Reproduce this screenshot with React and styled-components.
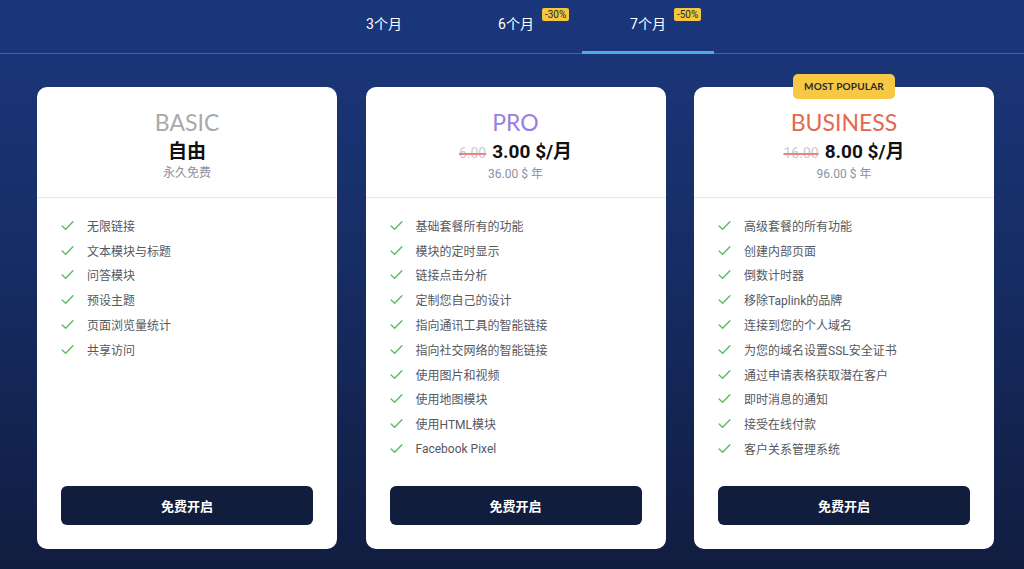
import React from 'react'
import styled, { createGlobalStyle } from 'styled-components'

const GlobalStyle = createGlobalStyle`
  html, body {
    margin: 0;
    padding: 0;
  }
  body {
    font-family: "Roboto", "Noto Sans CJK SC", sans-serif;
    background: linear-gradient(180deg, #1b377c 0%, #172e68 40%, #111d40 100%);
    min-height: 569px;
  }
`

const Page = styled.div`
  width: 1024px;
  height: 569px;
  overflow: hidden;
`

const TabBar = styled.div`
  display: flex;
  justify-content: center;
  padding-left: 8px;
  height: 53px;
  border-bottom: 1px solid rgba(255, 255, 255, 0.22);
`

const Tab = styled.div`
  width: 132px;
  display: flex;
  justify-content: center;
  align-items: center;
  padding-bottom: 5px;
  box-sizing: border-box;
  color: #fff;
  font-size: 14px;
  font-weight: 400;
  border-bottom: 3px solid ${(p) => (p.active ? '#4aaeea' : 'transparent')};
  margin-bottom: -1px;
`

const TabLabel = styled.span`
  position: relative;
`

const Discount = styled.span`
  position: absolute;
  left: 100%;
  top: -5px;
  margin-left: 8px;
  background: #f6c63f;
  color: #2a2a2a;
  font-size: 10px;
  font-weight: 400;
  padding: 0 3px;
  border-radius: 2px;
  line-height: 13px;
  white-space: nowrap;
`

const Cards = styled.div`
  display: grid;
  grid-template-columns: repeat(3, 300px);
  column-gap: 28.5px;
  padding-left: 37px;
  margin-top: 33px;
`

const Card = styled.div`
  position: relative;
  background: #fff;
  border-radius: 10px;
  height: 462px;
  display: flex;
  flex-direction: column;
`

const Popular = styled.div`
  position: absolute;
  top: -13px;
  left: 50%;
  transform: translateX(-50%);
  background: #f6c843;
  color: #2a2a2a;
  font-family: "Lato", "Roboto", sans-serif;
  font-size: 10px;
  font-weight: 700;
  letter-spacing: 0.2px;
  padding: 0 11px;
  height: 25px;
  line-height: 25px;
  border-radius: 5px;
  white-space: nowrap;
`

const Header = styled.div`
  height: 111px;
  box-sizing: border-box;
  border-bottom: 1px solid #e8e8ec;
  display: flex;
  flex-direction: column;
  align-items: center;
  padding-top: 21px;
`

const PlanName = styled.div`
  font-family: "Lato", sans-serif;
  font-size: 23px;
  font-weight: 400;
  line-height: 28px;
  color: ${(p) => p.color};
`

const PriceRow = styled.div`
  display: flex;
  align-items: baseline;
  gap: 6px;
  margin-top: 3px;
  line-height: 26px;
`

const OldPrice = styled.span`
  font-size: 14px;
  color: #c9c9cf;
  text-decoration: line-through;
  text-decoration-color: #e8867c;
  text-decoration-thickness: 1.5px;
`

const Price = styled.span`
  font-size: 19px;
  font-weight: 700;
  color: #111;
`

const Sub = styled.div`
  font-size: 12px;
  color: #8d929e;
  line-height: 16px;
`

const Features = styled.ul`
  list-style: none;
  margin: 0;
  padding: 15px 0 0 24px;
  flex: 1;
`

const Feature = styled.li`
  display: flex;
  align-items: center;
  height: 24.8px;
  font-size: 12px;
  color: #55585f;
`

const Check = styled.svg`
  width: 13px;
  height: 13px;
  margin-right: 13px;
  flex-shrink: 0;
`

const Button = styled.button`
  margin: 0 24px 24px;
  height: 39px;
  border: none;
  border-radius: 6px;
  background: #111d3d;
  color: #fff;
  font-family: "Roboto", "Noto Sans CJK SC", sans-serif;
  font-size: 13px;
  font-weight: 700;
`

const plans = [
  {
    name: 'BASIC',
    color: '#a9a9ab',
    price: '自由',
    sub: '永久免费',
    features: ['无限链接', '文本模块与标题', '问答模块', '预设主题', '页面浏览量统计', '共享访问'],
  },
  {
    name: 'PRO',
    color: '#9a7fdc',
    old: '6.00',
    price: '3.00 $/月',
    sub: '36.00 $ 年',
    features: [
      '基础套餐所有的功能',
      '模块的定时显示',
      '链接点击分析',
      '定制您自己的设计',
      '指向通讯工具的智能链接',
      '指向社交网络的智能链接',
      '使用图片和视频',
      '使用地图模块',
      '使用HTML模块',
      'Facebook Pixel',
    ],
  },
  {
    name: 'BUSINESS',
    color: '#e4674f',
    old: '16.00',
    price: '8.00 $/月',
    sub: '96.00 $ 年',
    popular: true,
    features: [
      '高级套餐的所有功能',
      '创建内部页面',
      '倒数计时器',
      '移除Taplink的品牌',
      '连接到您的个人域名',
      '为您的域名设置SSL安全证书',
      '通过申请表格获取潜在客户',
      '即时消息的通知',
      '接受在线付款',
      '客户关系管理系统',
    ],
  },
]

const CheckIcon = () => (
  <Check viewBox="0 0 12 12">
    <path d="M1 6.5 L4.3 9.5 L11 2.5" fill="none" stroke="#5bbd62" strokeWidth="1.3" strokeLinecap="round" strokeLinejoin="round" />
  </Check>
)

const App = () => (
  <Page>
    <GlobalStyle />
    <TabBar>
      <Tab>
        <TabLabel>3个月</TabLabel>
      </Tab>
      <Tab>
        <TabLabel>
          6个月<Discount>-30%</Discount>
        </TabLabel>
      </Tab>
      <Tab active>
        <TabLabel>
          7个月<Discount>-50%</Discount>
        </TabLabel>
      </Tab>
    </TabBar>
    <Cards>
      {plans.map((plan) => (
        <Card key={plan.name}>
          {plan.popular && <Popular>MOST POPULAR</Popular>}
          <Header>
            <PlanName color={plan.color}>{plan.name}</PlanName>
            <PriceRow>
              {plan.old && <OldPrice>{plan.old}</OldPrice>}
              <Price>{plan.price}</Price>
            </PriceRow>
            <Sub>{plan.sub}</Sub>
          </Header>
          <Features>
            {plan.features.map((f) => (
              <Feature key={f}>
                <CheckIcon />
                {f}
              </Feature>
            ))}
          </Features>
          <Button>免费开启</Button>
        </Card>
      ))}
    </Cards>
  </Page>
)

export default App
